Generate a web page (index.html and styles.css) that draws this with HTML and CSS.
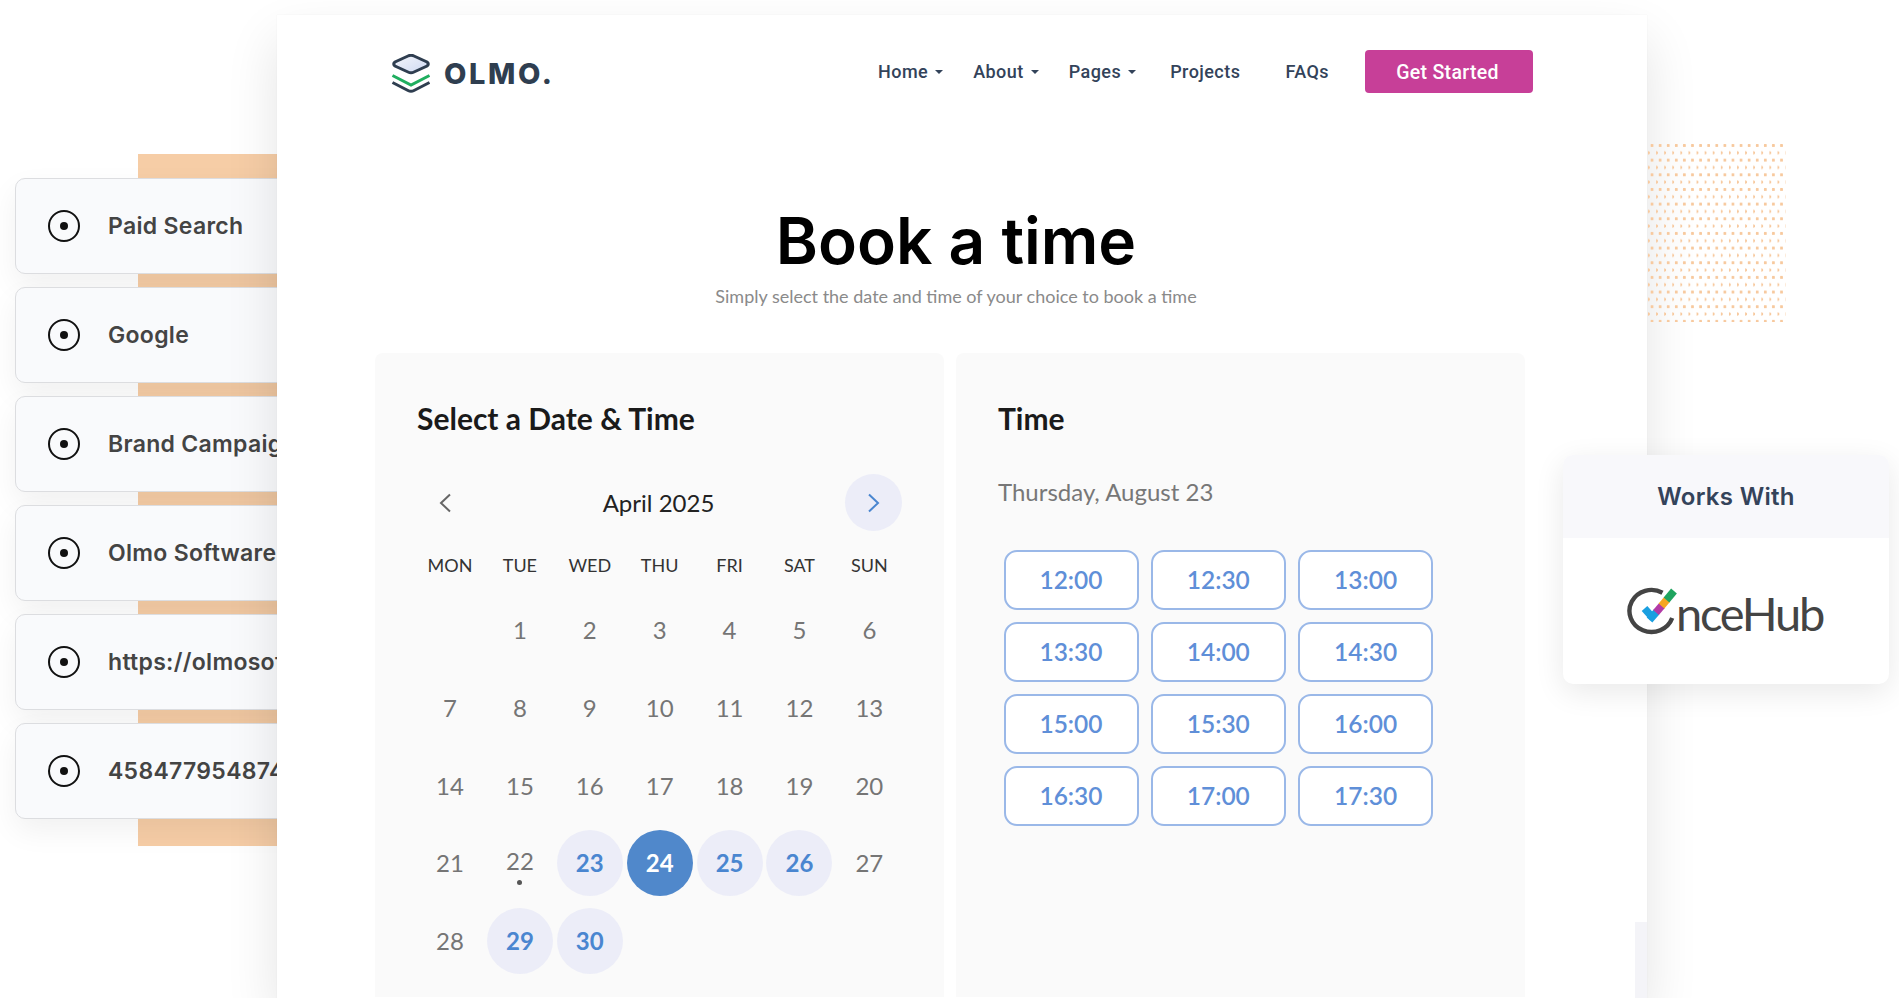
FILE: index.html
```html
<!DOCTYPE html>
<html lang="en">
<head>
<meta charset="utf-8">
<title>Book a time</title>
<link rel="stylesheet" href="styles.css">
</head>
<body>
<div class="accent"></div>
<div class="sources">
  <div class="source"><svg class="radio" viewBox="0 0 32 32"><circle cx="16" cy="16" r="15" fill="none" stroke="#111" stroke-width="2"/><circle cx="16" cy="16" r="4" fill="#111"/></svg><span>Paid Search</span></div>
  <div class="source"><svg class="radio" viewBox="0 0 32 32"><circle cx="16" cy="16" r="15" fill="none" stroke="#111" stroke-width="2"/><circle cx="16" cy="16" r="4" fill="#111"/></svg><span>Google</span></div>
  <div class="source"><svg class="radio" viewBox="0 0 32 32"><circle cx="16" cy="16" r="15" fill="none" stroke="#111" stroke-width="2"/><circle cx="16" cy="16" r="4" fill="#111"/></svg><span>Brand Campaign</span></div>
  <div class="source"><svg class="radio" viewBox="0 0 32 32"><circle cx="16" cy="16" r="15" fill="none" stroke="#111" stroke-width="2"/><circle cx="16" cy="16" r="4" fill="#111"/></svg><span>Olmo Software</span></div>
  <div class="source"><svg class="radio" viewBox="0 0 32 32"><circle cx="16" cy="16" r="15" fill="none" stroke="#111" stroke-width="2"/><circle cx="16" cy="16" r="4" fill="#111"/></svg><span>https://olmosoftware.com</span></div>
  <div class="source"><svg class="radio" viewBox="0 0 32 32"><circle cx="16" cy="16" r="15" fill="none" stroke="#111" stroke-width="2"/><circle cx="16" cy="16" r="4" fill="#111"/></svg><span>4584779548745</span></div>
</div>

<main class="window">
  <header class="topbar">
    <div class="brand">
      <svg class="brand-mark" viewBox="0 0 40 39">
        <defs><linearGradient id="g" x1="0" y1="0" x2="1" y2="1"><stop offset="0" stop-color="#f4f6fb"/><stop offset="1" stop-color="#cfd9f2"/></linearGradient></defs>
        <path d="M17 2Q20 .6 23 2L36 8Q38.600 10 36 12L23 18Q20 19.400 17 18L4 12Q1.400 10 4 8Z" fill="url(#g)" stroke="#2f3e50" stroke-width="3"/>
        <path d="M1.500 21.500L20 31L38.500 21.500" fill="none" stroke="#1fae5f" stroke-width="3"/>
        <path d="M1.500 28.500L17 36.500Q20 38 23 36.500L38.500 28.500" fill="none" stroke="#2f3e50" stroke-width="3"/>
      </svg>
      <span class="brand-name">OLMO.</span>
    </div>
    <nav class="nav">
      <a class="nav-link">Home<i class="caret"></i></a>
      <a class="nav-link">About<i class="caret"></i></a>
      <a class="nav-link">Pages<i class="caret"></i></a>
      <a class="nav-link nav-projects">Projects</a>
      <a class="nav-link nav-faqs">FAQs</a>
      <a class="cta">Get Started</a>
    </nav>
  </header>

  <section class="intro">
    <h1>Book a time</h1>
    <p>Simply select the date and time of your choice to book a time</p>
  </section>

  <section class="booking">
    <div class="panel panel-date">
      <h2>Select a Date &amp; Time</h2>
      <div class="month">
        <button class="arrow"><svg viewBox="0 0 14 20" width="14" height="20"><path d="M12 1.500L3 10L12 18.500" fill="none" stroke="#666" stroke-width="2"/></svg></button>
        <span class="month-name">April 2025</span>
        <button class="arrow arrow-next"><svg viewBox="0 0 14 20" width="14" height="20"><path d="M3 1.500L12 10L3 18.500" fill="none" stroke="#4a86d0" stroke-width="2"/></svg></button>
      </div>
      <div class="weekdays">
        <span>MON</span><span>TUE</span><span>WED</span><span>THU</span><span>FRI</span><span>SAT</span><span>SUN</span>
      </div>
      <div class="days">
        <span></span><span class="day">1</span><span class="day">2</span><span class="day">3</span><span class="day">4</span><span class="day">5</span><span class="day">6</span>
        <span class="day">7</span><span class="day">8</span><span class="day">9</span><span class="day">10</span><span class="day">11</span><span class="day">12</span><span class="day">13</span>
        <span class="day">14</span><span class="day">15</span><span class="day">16</span><span class="day">17</span><span class="day">18</span><span class="day">19</span><span class="day">20</span>
        <span class="day">21</span><span class="day today">22</span><span class="day open">23</span><span class="day picked">24</span><span class="day open">25</span><span class="day open">26</span><span class="day">27</span>
        <span class="day">28</span><span class="day open">29</span><span class="day open">30</span>
      </div>
    </div>
    <div class="panel panel-time">
      <h2>Time</h2>
      <p class="date-line">Thursday, August 23</p>
      <div class="slots">
        <button class="slot">12:00</button><button class="slot">12:30</button><button class="slot">13:00</button>
        <button class="slot">13:30</button><button class="slot">14:00</button><button class="slot">14:30</button>
        <button class="slot">15:00</button><button class="slot">15:30</button><button class="slot">16:00</button>
        <button class="slot">16:30</button><button class="slot">17:00</button><button class="slot">17:30</button>
      </div>
    </div>
  </section>
  <div class="edge-tab"></div>
</main>

<div class="dots"></div>

<aside class="works">
  <div class="works-head">Works With</div>
  <div class="works-body">
    <svg class="hub-mark" viewBox="0 0 52 48">
      <path d="M37.500 5.800A22 21 0 1 0 47.200 31" fill="none" stroke="#444" stroke-width="4.400"/>
      <path d="M19.500 21.500L28 31" fill="none" stroke="#1a9fe0" stroke-width="7.500"/>
      <path d="M24.500 33L31.500 25" fill="none" stroke="#1a9fe0" stroke-width="7.500"/>
      <path d="M31 25.500L37 18.500" fill="none" stroke="#b23aa6" stroke-width="7.500"/>
      <path d="M36.500 19L42 12.500" fill="none" stroke="#f5a623" stroke-width="7.500"/>
      <path d="M41.500 13L49 4" fill="none" stroke="#1fa45f" stroke-width="7.500"/>
    </svg>
    <span class="hub-name">nceHub</span>
  </div>
</aside>
</body>
</html>
```
FILE: styles.css
```css
* { box-sizing: border-box; }
html, body { margin: 0; height: 998px; overflow: hidden; background: #fff; }
body { position: relative; font-family: "Lato", sans-serif; }

/* free-floating pieces behind and around the window */
.accent {
  position: absolute; left: 138px; top: 154px; width: 180px; height: 692px;
  background: #f6cda6;
}
.sources {
  position: absolute; left: 15px; top: 178px; width: 440px;
  display: flex; flex-direction: column; gap: 13px;
}
.source {
  height: 96px; padding-left: 32px;
  display: flex; align-items: center; gap: 28px;
  background: #f9fafc; border: 1px solid #dcdde0; border-radius: 10px;
  box-shadow: 0 12px 30px rgba(0,0,0,.06);
  font-family: "Inter", sans-serif; font-weight: 600; font-size: 23px; letter-spacing: .3px; color: #444;
  white-space: nowrap;
}
.radio { width: 32px; height: 32px; flex: none; }

.window {
  position: absolute; left: 277px; top: 15px; width: 1370px; height: 983px;
  background: #fff;
  box-shadow: 0 0 1px rgba(0,0,0,.08), 0 24px 50px rgba(0,0,0,.11);
}
.topbar {
  display: flex; align-items: center; justify-content: space-between;
  padding: 35px 114px 0;
}
.brand { display: flex; align-items: center; gap: 13px; margin-top: 3px; }
.brand-mark { width: 40px; height: 39px; display: block; }
.brand-name {
  font-family: "Inter", sans-serif; font-weight: 800; font-size: 29px; line-height: 39px;
  letter-spacing: 2.600px; color: #2f3e50; margin-top: 1px;
}
.nav { display: flex; align-items: center; gap: 30px; }
.nav-link {
  display: flex; align-items: center; gap: 7px;
  font-family: "Roboto", sans-serif; font-weight: 500; font-size: 18px; color: #33435a;
  letter-spacing: .45px;
}
.caret { width: 0; height: 0; border: 4px solid transparent; border-top-color: #33435a; border-bottom: 0; }
.nav-projects { margin-left: 4px; }
.nav-faqs { margin-left: 15px; }
.cta {
  width: 168px; height: 43px; margin-left: 6px; padding: 2px 3px 0 0;
  display: flex; align-items: center; justify-content: center;
  background: #c73f98; border-radius: 4px; color: #fff;
  font-family: "Roboto", sans-serif; font-weight: 500; font-size: 19.500px; letter-spacing: .3px;
}

.intro { margin: 0 0 0 98px; width: 1162px; padding-top: 109px; text-align: center; }
.intro h1 {
  margin: 2px 0 0; font-family: "Inter", sans-serif; font-weight: 600; font-size: 64px; line-height: 74px;
  color: #000;
}
.intro p { margin: 6px 0 0; font-size: 18px; line-height: 24px; color: #8a8a8a; }

.booking { display: flex; gap: 12px; margin: 45px 0 0 98px; }
.panel { width: 569px; height: 644px; background: #fafafa; border-radius: 8px 8px 0 0; padding: 44px 42px 0; }
.panel h2 { margin: 0; font-size: 30px; line-height: 42px; font-weight: 700; color: #1a1a1a; }

.month { display: flex; align-items: center; justify-content: space-between; margin-top: 35px; height: 57px; width: 485px; padding-left: 9px; }
.month-name { font-size: 24px; color: #222; position: relative; left: -3px; }
.arrow {
  width: 57px; height: 57px; padding: 0; border: 0; border-radius: 50%; background: none;
  display: flex; align-items: center; justify-content: center;
}
.arrow:first-child { width: 40px; justify-content: flex-start; margin-left: 12px; }
.arrow-next { background: #ecedf8; }

.weekdays { display: grid; grid-template-columns: repeat(7, 66px); column-gap: 3.900px; margin-top: 22px; }
.weekdays span { text-align: center; font-size: 18px; line-height: 24px; color: #333; }

.days { display: grid; grid-template-columns: repeat(7, 66px); column-gap: 3.900px; row-gap: 11.800px; margin-top: 19.500px; }
.day {
  height: 66px; border-radius: 50%; position: relative;
  display: flex; align-items: center; justify-content: center;
  font-size: 24px; color: #757575;
}
.open { background: #ecedf8; color: #4a86d0; font-weight: 700; }
.picked { background: #5088cb; color: #fff; font-weight: 700; }
.today { padding-bottom: 4px; }
.today::after {
  content: ""; position: absolute; left: 30.500px; top: 50px; width: 5px; height: 5px;
  border-radius: 50%; background: #555;
}

.date-line { margin: 36.500px 0 0; font-size: 24px; line-height: 32px; color: #777; }
.slots {
  display: grid; grid-template-columns: repeat(3, 135px); column-gap: 12.300px; row-gap: 12px;
  margin: 42px 0 0 5.500px;
}
.slot {
  height: 60px; padding: 0; background: #fff; border: 2px solid #9ab8e8; border-radius: 13px;
  font-family: "Lato", sans-serif; font-size: 24.500px; font-weight: 600; color: #5f8fd8;
}
.edge-tab { position: absolute; left: 1358px; top: 907px; width: 12px; height: 76px; background: #f4f4f8; }

.dots {
  position: absolute; left: 1648px; top: 144px; width: 138px; height: 178px;
  background-image:
    radial-gradient(circle at 4px 1.500px, #f7c99e 1.300px, transparent 1.800px),
    radial-gradient(circle at 0.500px 8.800px, #f7c99e 1.300px, transparent 1.800px);
  background-size: 8.100px 14.670px;
}

.works {
  position: absolute; left: 1563px; top: 455px; width: 326px; height: 229px;
  background: #fff; border-radius: 10px; overflow: hidden;
  box-shadow: 0 8px 30px rgba(0,0,0,.09);
}
.works-head {
  height: 83px; background: #f8f8fb;
  display: flex; align-items: center; justify-content: center;
  font-family: "Inter", sans-serif; font-weight: 600; font-size: 24px; letter-spacing: .3px; color: #34435a;
}
.works-body { display: flex; align-items: center; justify-content: center; height: 146px; padding-right: 4px; }
.hub-mark { width: 52px; height: 48px; flex: none; }
.hub-name {
  font-family: "Lato", sans-serif; font-size: 47px; line-height: 44px; color: #444;
  letter-spacing: -2.200px; margin: 3px 0 0 -1px;
}
```
